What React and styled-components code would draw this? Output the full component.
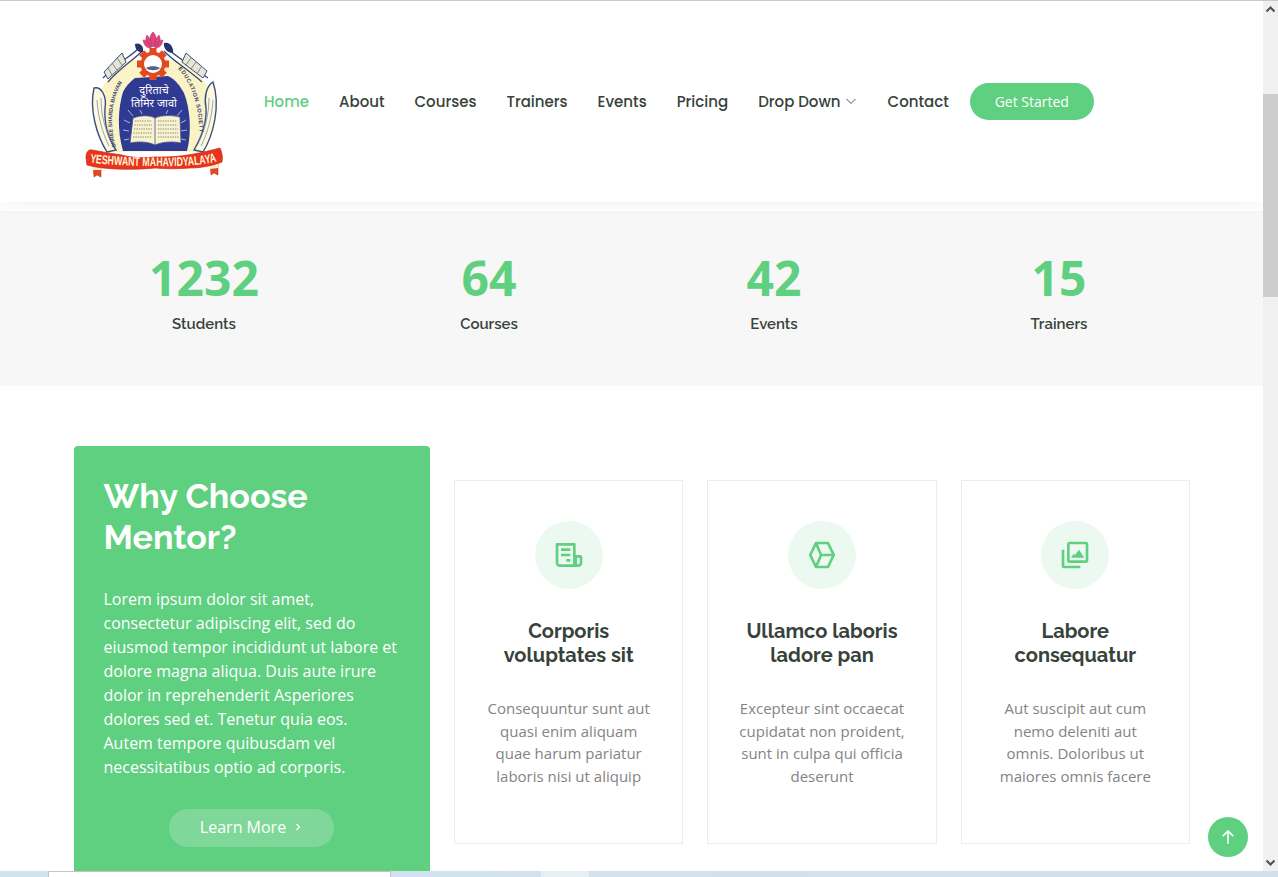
import React from "react";
import styled, { createGlobalStyle } from "styled-components";

const GREEN = "#5fcf80";

const GlobalStyle = createGlobalStyle`
  html, body {
    margin: 0;
    padding: 0;
    height: 100%;
    overflow: hidden;
    background: #fff;
  }
  body {
    font-family: "Open Sans", "Liberation Sans", sans-serif;
    color: #444;
  }
  * {
    box-sizing: border-box;
  }
`;

const Screen = styled.div`
  width: 1278px;
  height: 877px;
  display: flex;
  flex-direction: column;
  overflow: hidden;
`;

const TopLine = styled.div`
  height: 1px;
  flex: none;
  background: #c9c9c9;
`;

const Viewport = styled.div`
  position: relative;
  flex: 1;
  min-height: 0;
  display: flex;
`;

const Page = styled.div`
  flex: 1;
  min-width: 0;
  overflow: hidden;
`;

const Scrollbar = styled.div`
  width: 15px;
  flex: none;
  background: #f0f0f0;
  display: flex;
  flex-direction: column;
  align-items: center;
`;

const ScrollArrow = styled.svg`
  width: 15px;
  height: 17px;
  flex: none;
  color: #505050;
`;

const ScrollGap = styled.div`
  flex: ${(p) => p.$grow};
`;

const ScrollThumb = styled.div`
  width: 15px;
  height: 203px;
  flex: none;
  background: #cdcdcd;
`;

const Header = styled.header`
  height: 201px;
  background: #fff;
  box-shadow: 0 0 18px rgba(55, 81, 126, 0.09);
  position: relative;
  z-index: 2;
  display: flex;
  align-items: center;
  padding-left: 85px;
`;

const LogoLink = styled.a`
  width: 138px;
  height: 148px;
  flex: none;
  margin-right: 41px;
  margin-top: 5px;
  display: block;
`;

const Nav = styled.nav`
  display: flex;
  align-items: center;
  margin-bottom: 1px;
`;

const NavLink = styled.a`
  font-family: Poppins, Inter, "Noto Sans", sans-serif;
  font-size: 15px;
  font-weight: 500;
  color: ${(p) => (p.$active ? GREEN : "#37423b")};
  margin-right: 30px;
  display: flex;
  align-items: center;
  gap: 4px;
  white-space: nowrap;
`;

const GetStarted = styled.a`
  width: 124px;
  height: 37px;
  margin-left: -9px;
  border-radius: 50px;
  background: ${GREEN};
  color: #fff;
  font-size: 14px;
  display: flex;
  align-items: center;
  justify-content: center;
`;

const Counts = styled.section`
  margin-top: 9px;
  height: 175px;
  background: #f7f7f7;
  padding: 38px 61.5px 0;
  display: grid;
  grid-template-columns: repeat(4, 1fr);
  text-align: center;
`;

const Count = styled.div`
  display: flex;
  flex-direction: column;
  align-items: center;
`;

const CountNumber = styled.span`
  font-size: 48px;
  line-height: 57px;
  font-weight: 700;
  color: ${GREEN};
`;

const CountLabel = styled.span`
  font-family: Raleway, Lato, "Noto Sans", sans-serif;
  font-size: 15px;
  line-height: 24px;
  font-weight: 600;
  color: #37423b;
  margin-top: 6px;
`;

const Why = styled.section`
  padding: 60px 73px 0 73.5px;
  display: grid;
  grid-template-columns: 356px 1fr;
  gap: 24.5px;
`;

const WhyBox = styled.div`
  height: 440px;
  background: ${GREEN};
  border-radius: 4px;
  padding: 30px;
  color: #fff;
`;

const WhyTitle = styled.h3`
  margin: 0 0 29px;
  font-family: Raleway, Lato, "Noto Sans", sans-serif;
  font-size: 34px;
  line-height: 41px;
  font-weight: 700;
`;

const WhyText = styled.p`
  margin: 0 0 30px;
  font-size: 16px;
  line-height: 24px;
`;

const LearnMore = styled.a`
  width: 165px;
  height: 38px;
  margin: 0 auto;
  padding-bottom: 2px;
  border-radius: 50px;
  background: rgba(255, 255, 255, 0.2);
  font-size: 16px;
  display: flex;
  align-items: center;
  justify-content: center;
  gap: 7px;
`;

const IconBoxes = styled.div`
  padding-top: 34px;
  display: grid;
  grid-template-columns: repeat(3, 1fr);
  gap: 24px;
  align-items: start;
`;

const IconBox = styled.div`
  height: 364px;
  border: 1px solid #ececec;
  padding: 40px 30px 0;
  display: flex;
  flex-direction: column;
  align-items: center;
  text-align: center;
`;

const IconCircle = styled.div`
  width: 68px;
  height: 68px;
  border-radius: 50%;
  background: #ecf9f0;
  color: ${GREEN};
  display: flex;
  align-items: center;
  justify-content: center;
  margin-bottom: 30px;
`;

const BoxTitle = styled.h4`
  margin: 0 0 30px;
  font-family: Raleway, Lato, "Noto Sans", sans-serif;
  font-size: 20px;
  line-height: 24px;
  font-weight: 700;
  color: #37423b;
`;

const BoxText = styled.p`
  margin: 0;
  font-size: 15px;
  line-height: 22.5px;
  color: #848484;
`;

const BackToTop = styled.a`
  position: absolute;
  right: 30px;
  bottom: 14px;
  width: 40px;
  height: 40px;
  border-radius: 50%;
  background: ${GREEN};
  color: #fff;
  display: flex;
  align-items: center;
  justify-content: center;
`;

const BottomStrip = styled.div`
  height: 6px;
  flex: none;
  display: flex;
  background: linear-gradient(90deg, #cfe4f0, #d2e0ee);
`;

const StripPiece = styled.div`
  width: ${(p) => p.$w}px;
  flex: none;
  background: ${(p) => p.$bg || "transparent"};
  border: ${(p) => (p.$framed ? "1px solid #c4c4c4" : "none")};
  border-bottom: none;
`;

const Logo = () => (
  <svg width="138" height="148" viewBox="15 10 138 148">
    <defs>
      <path id="arcL" d="M46 127 C38 100 42 72 59.5 52" />
      <path id="arcR" d="M108 49 C120 60 132 90 129 124" />
    </defs>
    {/* cream ground */}
    <path
      d="M60 40 C48 46 40 56 34 64 C26 80 28 108 36 132 L134 132 C144 108 144 80 136 64 C130 56 118 44 106 40 Z"
      fill="#f9f3c6"
    />
    {/* arms, from the leaves under the lotus to the sleeves */}
    <path d="M70 27 C62 36 48 42 33 58" stroke="#33457c" strokeWidth="1.2" fill="none" />
    <path d="M72 31 C64 40 52 46 38 62" stroke="#33457c" strokeWidth="1.2" fill="none" />
    <path d="M96 27 C104 36 120 44 138 58" stroke="#33457c" strokeWidth="1.2" fill="none" />
    <path d="M94 31 C102 40 116 48 132 62" stroke="#33457c" strokeWidth="1.2" fill="none" />
    <path d="M65 24 C70 22 74 26 73 32 C69 33 65 30 65 24 Z" fill="#26336e" />
    <path d="M94 23 C100 21 104 28 103 33 C98 33 93 29 94 23 Z" fill="#26336e" />
    {/* sleeves */}
    <path d="M52 33 L34 52 L38 59 L56 42 Z" fill="#e6e6d2" stroke="#3a4f82" strokeWidth="1" />
    <path d="M47 38 L52 45 M42 43 L47 50 M38 48 L42 55" stroke="#6d7aa0" strokeWidth="0.9" />
    <path d="M116 33 L137 51 L133 58 L112 42 Z" fill="#e6e6d2" stroke="#3a4f82" strokeWidth="1" />
    <path d="M121 38 L116 45 M126 42 L121 49 M131 47 L127 54" stroke="#6d7aa0" strokeWidth="0.9" />
    {/* hands */}
    <path d="M24 68 C31 66 37 76 35 88 C34 104 38 118 46 130 L37 132 C27 116 19 90 24 68 Z" fill="#fdf9dc" stroke="#3a4f82" strokeWidth="1.4" />
    <path d="M27 80 C28 96 32 112 39 126 M31 78 C31 94 35 110 42 124" stroke="#7f8db0" strokeWidth="0.8" fill="none" />
    <path d="M143 62 C136 66 134 78 136 88 C137 104 131 118 124 130 L133 132 C143 116 151 86 143 62 Z" fill="#fdf9dc" stroke="#3a4f82" strokeWidth="1.4" />
    <path d="M143 80 C142 96 138 112 131 126 M139 78 C139 94 135 110 128 124" stroke="#7f8db0" strokeWidth="0.8" fill="none" />
    {/* navy field */}
    <path d="M53 131 C47 110 48 88 53 72 C56 66 60 62 65 58 L98 56 C106 60 110 66 114 73 C120 88 122 112 117 131 Z" fill="#2f3a92" />
    <path
      d="M58 90 L63 96 M54 100 L60 103 M53 110 L59 111 M54 120 L59 119 M112 90 L107 96 M116 100 L111 103 M117 110 L111 111 M116 120 L111 119 M70 90 L72 94 M98 90 L96 94"
      stroke="#cfd2ec"
      strokeWidth="0.8"
    />
    {/* gear */}
    <g fill="#e2491f">
      <circle cx="83" cy="44" r="12.5" />
      <rect x="79.5" y="28" width="7" height="32" />
      <rect x="67" y="40.5" width="32" height="7" />
      <rect x="79.5" y="28" width="7" height="32" transform="rotate(45 83 44)" />
      <rect x="79.5" y="28" width="7" height="32" transform="rotate(-45 83 44)" />
    </g>
    <circle cx="83" cy="44" r="9" fill="#fff" />
    <path d="M76 48 C80 45.5 86 45.5 90 48 C87 51 79 51 76 48 Z" fill="#55608f" />
    {/* lotus */}
    <g fill="#e0457e" stroke="#a82a5c" strokeWidth="0.5">
      <path d="M83 12 C87 16 88 22 83 27 C78 22 79 16 83 12 Z" />
      <path d="M77 15 C80 18 81 22 82 27 C77 27 74 21 77 15 Z" />
      <path d="M89 15 C86 18 85 22 84 27 C89 27 92 21 89 15 Z" />
      <path d="M73 20 C77 20 79 24 81 28 C76 28 74 25 73 20 Z" />
      <path d="M93 20 C89 20 87 24 85 28 C90 28 92 25 93 20 Z" />
    </g>
    {/* ring lettering */}
    <text fontFamily="'Liberation Sans', sans-serif" fontSize="5.4" fontWeight="700" fill="#3a3f6e">
      <textPath href="#arcL">SHREE SHARDA BHAVAN</textPath>
    </text>
    <text fontFamily="'Liberation Sans', sans-serif" fontSize="5.6" fontWeight="700" fill="#3a3f6e" letterSpacing="0.6">
      <textPath href="#arcR">EDUCATION SOCIETY</textPath>
    </text>
    {/* motto */}
    <text x="84" y="74" textAnchor="middle" fontFamily="'Noto Sans', sans-serif" fontSize="11" fill="#fff">दुरिताचे</text>
    <text x="84" y="87" textAnchor="middle" fontFamily="'Noto Sans', sans-serif" fontSize="11" fill="#fff">तिमिर जावो</text>
    {/* book */}
    <path d="M63 98 C71 95 80 95 85 98 C91 95 102 95 110 97 L111 123 C102 121 92 122 85 125 C79 122 69 121 60 123 Z" fill="#f7f2cf" stroke="#4a4f88" strokeWidth="0.8" />
    <path d="M85 98 L85 125" stroke="#4a4f88" strokeWidth="0.8" />
    <path
      d="M65 101 H82 M64.5 105 H82 M64 109 H82 M63.5 113 H82 M63 117 H82 M88 101 H107 M88 105 H107.5 M88 109 H108 M88 113 H108 M88 117 H108.5"
      stroke="#8d8d70"
      strokeWidth="1.1"
      strokeDasharray="1.4 1"
    />
    {/* banner tails */}
    <path d="M23 145 L31 146 L31 157 L27 155 L24 157 Z" fill="#e2491f" stroke="#b92a12" strokeWidth="0.5" />
    <path d="M23 146 L31 147 L31 150 L23 150 Z" fill="#fbeccb" />
    <path d="M140 144 L148 142 L148 155 L144 153 L141 155 Z" fill="#e2491f" stroke="#b92a12" strokeWidth="0.5" />
    <path d="M140 145 L148 143 L148 148 L140 149 Z" fill="#fbeccb" />
    {/* banner */}
    <path d="M16 138 C16 133 18 129 22 130 C34 132 44 134 52 135 C62 138 74 138 85 137 C112 138 134 132 150 128 C152 132 153 138 152 142 C142 146 130 148 120 148 C108 149 96 149 85 148 C66 150 34 150 17 145 Z" fill="#e8341c" stroke="#c92812" strokeWidth="0.7" />
    <path id="bannerLine" d="M20 142.5 C40 145 62 146 85 146 C108 146.5 130 146 148 141" fill="none" />
    <text fontFamily="'Liberation Sans Narrow', 'Liberation Sans', sans-serif" fontSize="12.5" fontWeight="700" fill="#fff3d8">
      <textPath href="#bannerLine" textLength="127" lengthAdjust="spacingAndGlyphs">YESHWANT MAHAVIDYALAYA</textPath>
    </text>
  </svg>
);

const ReceiptIcon = () => (
  <svg width="32" height="32" viewBox="0 0 24 24" fill="currentColor">
    <path d="M20 12h-3V4a1 1 0 0 0-1-1H3a1 1 0 0 0-1 1v14c0 1.65 1.35 3 3 3h14c1.65 0 3-1.35 3-3v-4a2 2 0 0 0-2-2ZM5 19a1 1 0 0 1-1-1V5h11v13c0 .35.06.69.17 1H5Zm15-1a1 1 0 0 1-2 0v-4h2v4Z" />
    <path d="M6 7h7v2H6zM6 11h7v2H6zM10 15h3v2h-3z" />
  </svg>
);

const CubeIcon = () => (
  <svg width="32" height="32" viewBox="0 0 24 24" fill="none" stroke="currentColor" strokeWidth="2" strokeLinejoin="round">
    <path d="M7.5 3h9l4.3 9-4.3 9h-9L3.2 12Z" />
    <path d="M7.5 3l3.8 9-3.8 9M11.3 12h9.5" />
  </svg>
);

const ImagesIcon = () => (
  <svg width="32" height="32" viewBox="0 0 24 24" fill="currentColor">
    <path d="M20 2H8a2 2 0 0 0-2 2v12a2 2 0 0 0 2 2h12a2 2 0 0 0 2-2V4a2 2 0 0 0-2-2ZM8 16V4h12l.002 12H8Z" />
    <path d="M4 8H2v12a2 2 0 0 0 2 2h12v-2H4V8Z" />
    <path d="m12 12-1-1-2 3h10l-4-6-3 4Z" />
  </svg>
);

const counts = [
  ["1232", "Students"],
  ["64", "Courses"],
  ["42", "Events"],
  ["15", "Trainers"],
];

const boxes = [
  {
    Icon: ReceiptIcon,
    title: "Corporis voluptates sit",
    text: "Consequuntur sunt aut quasi enim aliquam quae harum pariatur laboris nisi ut aliquip",
  },
  {
    Icon: CubeIcon,
    title: "Ullamco laboris ladore pan",
    text: "Excepteur sint occaecat cupidatat non proident, sunt in culpa qui officia deserunt",
  },
  {
    Icon: ImagesIcon,
    title: "Labore consequatur",
    text: "Aut suscipit aut cum nemo deleniti aut omnis. Doloribus ut maiores omnis facere",
  },
];

export default function App() {
  return (
    <Screen>
      <GlobalStyle />
      <TopLine />
      <Viewport>
        <Page>
          <Header>
            <LogoLink>
              <Logo />
            </LogoLink>
            <Nav>
              <NavLink $active>Home</NavLink>
              <NavLink>About</NavLink>
              <NavLink>Courses</NavLink>
              <NavLink>Trainers</NavLink>
              <NavLink>Events</NavLink>
              <NavLink>Pricing</NavLink>
              <NavLink>
                Drop Down
                <svg width="13" height="12" viewBox="0 0 13 12" fill="none" stroke="currentColor" strokeWidth="0.9">
                  <path d="M1.5 4l4.5 4.5L10.5 4" />
                </svg>
              </NavLink>
              <NavLink>Contact</NavLink>
              <GetStarted>Get Started</GetStarted>
            </Nav>
          </Header>
          <Counts>
            {counts.map(([number, label]) => (
              <Count key={label}>
                <CountNumber>{number}</CountNumber>
                <CountLabel>{label}</CountLabel>
              </Count>
            ))}
          </Counts>
          <Why>
            <WhyBox>
              <WhyTitle>Why Choose Mentor?</WhyTitle>
              <WhyText>
                Lorem ipsum dolor sit amet, consectetur adipiscing elit, sed do eiusmod tempor incididunt ut labore et
                dolore magna aliqua. Duis aute irure dolor in reprehenderit Asperiores dolores sed et. Tenetur quia eos.
                Autem tempore quibusdam vel necessitatibus optio ad corporis.
              </WhyText>
              <LearnMore>
                Learn More
                <svg width="10" height="10" viewBox="0 0 10 10" fill="none" stroke="currentColor" strokeWidth="1.3">
                  <path d="M3.5 2l3 3-3 3" />
                </svg>
              </LearnMore>
            </WhyBox>
            <IconBoxes>
              {boxes.map(({ Icon, title, text }) => (
                <IconBox key={title}>
                  <IconCircle>
                    <Icon />
                  </IconCircle>
                  <BoxTitle>{title}</BoxTitle>
                  <BoxText>{text}</BoxText>
                </IconBox>
              ))}
            </IconBoxes>
          </Why>
        </Page>
        <Scrollbar>
          <ScrollArrow viewBox="0 0 15 17" fill="none" stroke="currentColor" strokeWidth="2">
            <path d="M3.5 10.5l4-4 4 4" />
          </ScrollArrow>
          <ScrollGap $grow="76" />
          <ScrollThumb />
          <ScrollGap $grow="557" />
          <ScrollArrow viewBox="0 0 15 17" fill="none" stroke="currentColor" strokeWidth="2">
            <path d="M3.5 6.5l4 4 4-4" />
          </ScrollArrow>
        </Scrollbar>
        <BackToTop>
          <svg width="18" height="18" viewBox="0 0 24 24" fill="none" stroke="currentColor" strokeWidth="2.2">
            <path d="M12 21V4M5 11l7-7 7 7" />
          </svg>
        </BackToTop>
      </Viewport>
      <BottomStrip>
        <StripPiece $w={48} />
        <StripPiece $w={343} $bg="#fff" $framed />
        <StripPiece $w={150} />
        <StripPiece $w={48} $bg="#e4f0f4" />
      </BottomStrip>
    </Screen>
  );
}
